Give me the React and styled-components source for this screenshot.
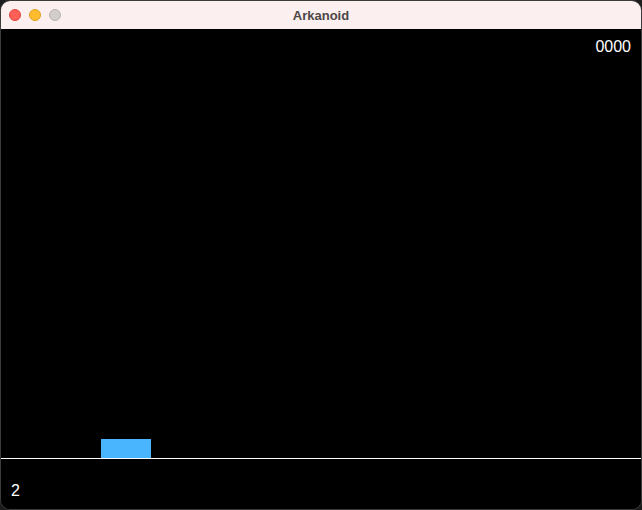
import React from 'react';
import styled, { createGlobalStyle } from 'styled-components';

const GlobalStyle = createGlobalStyle`
  html, body {
    margin: 0;
    padding: 0;
    background: #1c1c1c;
  }
  #root {
    width: 642px;
    height: 510px;
  }
`;

const Window = styled.div`
  box-sizing: border-box;
  width: 642px;
  height: 510px;
  display: flex;
  flex-direction: column;
  border: 1px solid #3c3c3c;
  border-radius: 10px;
  overflow: hidden;
  background: #000;
  font-family: "Liberation Sans", Arial, sans-serif;
`;

const TitleBar = styled.div`
  position: relative;
  height: 28px;
  flex: none;
  display: flex;
  align-items: center;
  justify-content: center;
  background: #fbefef;
`;

const Lights = styled.div`
  position: absolute;
  left: 8px;
  top: 8px;
  display: flex;
  gap: 8px;
`;

const Light = styled.span`
  box-sizing: border-box;
  width: 12px;
  height: 12px;
  border-radius: 50%;
  background: ${p => p.color};
  border: 0.5px solid ${p => p.edge};
`;

const Title = styled.span`
  font-size: 13px;
  font-weight: bold;
  color: #4b4646;
`;

const GameArea = styled.div`
  flex: 1;
  display: flex;
  flex-direction: column;
  background: #000;
  color: #fff;
`;

const ScoreRow = styled.div`
  display: flex;
  justify-content: flex-end;
  padding: 9px 10px 0 0;
  font-size: 16px;
  line-height: 18px;
`;

const Field = styled.div`
  position: relative;
  flex: 1;
`;

const Paddle = styled.div`
  position: absolute;
  left: ${p => p.x}px;
  bottom: 0;
  width: 50px;
  height: 19px;
  background: #4ab5ff;
`;

const Ground = styled.div`
  height: 1px;
  background: #fff;
`;

const Footer = styled.div`
  height: 50px;
  padding: 23px 0 0 10px;
  box-sizing: border-box;
  font-size: 16px;
  line-height: 18px;
`;

export default function App() {
  return (
    <>
      <GlobalStyle />
      <Window>
        <TitleBar>
          <Lights>
            <Light color="#fe5f57" edge="#e0443e" />
            <Light color="#febc2e" edge="#dea123" />
            <Light color="#d3cdcd" edge="#b9b3b3" />
          </Lights>
          <Title>Arkanoid</Title>
        </TitleBar>
        <GameArea>
          <ScoreRow>0000</ScoreRow>
          <Field>
            <Paddle x={100} />
          </Field>
          <Ground />
          <Footer>2</Footer>
        </GameArea>
      </Window>
    </>
  );
}
